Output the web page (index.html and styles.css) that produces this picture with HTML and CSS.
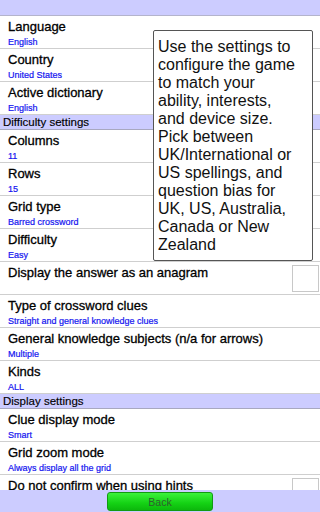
FILE: index.html
```html
<!DOCTYPE html>
<html>
<head>
<meta charset="utf-8">
<link rel="stylesheet" href="styles.css">
</head>
<body>
<div class="topbar"></div>
<div class="list">
  <div class="item"><div class="title">Language</div><div class="sub">English</div></div>
  <div class="item"><div class="title">Country</div><div class="sub">United States</div></div>
  <div class="item"><div class="title">Active dictionary</div><div class="sub">English</div></div>
  <div class="section">Difficulty settings</div>
  <div class="item"><div class="title">Columns</div><div class="sub">11</div></div>
  <div class="item"><div class="title">Rows</div><div class="sub">15</div></div>
  <div class="item"><div class="title">Grid type</div><div class="sub">Barred crossword</div></div>
  <div class="item"><div class="title">Difficulty</div><div class="sub">Easy</div></div>
  <div class="item check"><div class="title">Display the answer as an anagram</div><span class="box"></span></div>
  <div class="item"><div class="title">Type of crossword clues</div><div class="sub">Straight and general knowledge clues</div></div>
  <div class="item"><div class="title">General knowledge subjects (n/a for arrows)</div><div class="sub">Multiple</div></div>
  <div class="item"><div class="title">Kinds</div><div class="sub">ALL</div></div>
  <div class="section">Display settings</div>
  <div class="item"><div class="title">Clue display mode</div><div class="sub">Smart</div></div>
  <div class="item"><div class="title">Grid zoom mode</div><div class="sub">Always display all the grid</div></div>
  <div class="item check"><div class="title">Do not confirm when using hints</div><span class="box"></span></div>
</div>
<div class="tooltip">Use the settings to configure the game to match your ability, interests, and device size. Pick between UK/International or US spellings, and question bias for UK, US, Australia, Canada or New Zealand</div>
<div class="bottombar"><button class="back">Back</button></div>
</body>
</html>
```
FILE: styles.css
```css
html, body {
  margin: 0;
  padding: 0;
  background: #fff;
  overflow: hidden;
  width: 320px;
  height: 512px;
  font-family: "Liberation Sans", Arial, sans-serif;
}
.topbar {
  height: 15px;
  background: #ccccff;
  border-bottom: 1px solid #b4b4cc;
}
.list {
  display: flex;
  flex-direction: column;
}
.item {
  border-bottom: 1px solid #cfcfcf;
  padding: 3px 0 0 8px;
  box-sizing: content-box;
  height: 29px;
}
.title {
  font-size: 13px;
  line-height: 16px;
  color: #000;
  white-space: nowrap;
  -webkit-text-stroke: 0.3px #000;
}
.sub {
  font-size: 9px;
  line-height: 12px;
  margin-top: 1px;
  color: #1414f0;
  white-space: nowrap;
  -webkit-text-stroke: 0.2px #1414f0;
}
.check {
  display: flex;
  justify-content: space-between;
  align-items: flex-start;
}
.box {
  width: 25px;
  height: 25px;
  border: 1px solid #c8c8c8;
  background: #fff;
  margin-right: 1px;
}
.section {
  height: 14px;
  line-height: 14px;
  background: #ccccff;
  border-bottom: 1px solid #a8a8c0;
  font-size: 11.5px;
  color: #000;
  padding-left: 3px;
  -webkit-text-stroke: 0.15px #000;
}
.tooltip {
  position: absolute;
  left: 153px;
  top: 30px;
  width: 142px;
  height: 222px;
  padding: 7px 12px 0 4px;
  border: 1px solid #555;
  border-radius: 2px;
  background: #fff;
  font-size: 16px;
  color: #111;
}
.bottombar {
  position: fixed;
  left: 0;
  bottom: 0;
  width: 320px;
  height: 22px;
  background: #ccccff;
  display: flex;
  justify-content: center;
  align-items: flex-start;
}
.back {
  margin-top: 2px;
  width: 106px;
  height: 19px;
  padding: 0;
  border: 1px solid #129a12;
  border-radius: 3px;
  background: linear-gradient(#3cf23c, #14d214 60%, #0cb80c);
  font-family: "Liberation Sans", Arial, sans-serif;
  font-size: 10.5px;
  color: #2f5e2f;
}
```
